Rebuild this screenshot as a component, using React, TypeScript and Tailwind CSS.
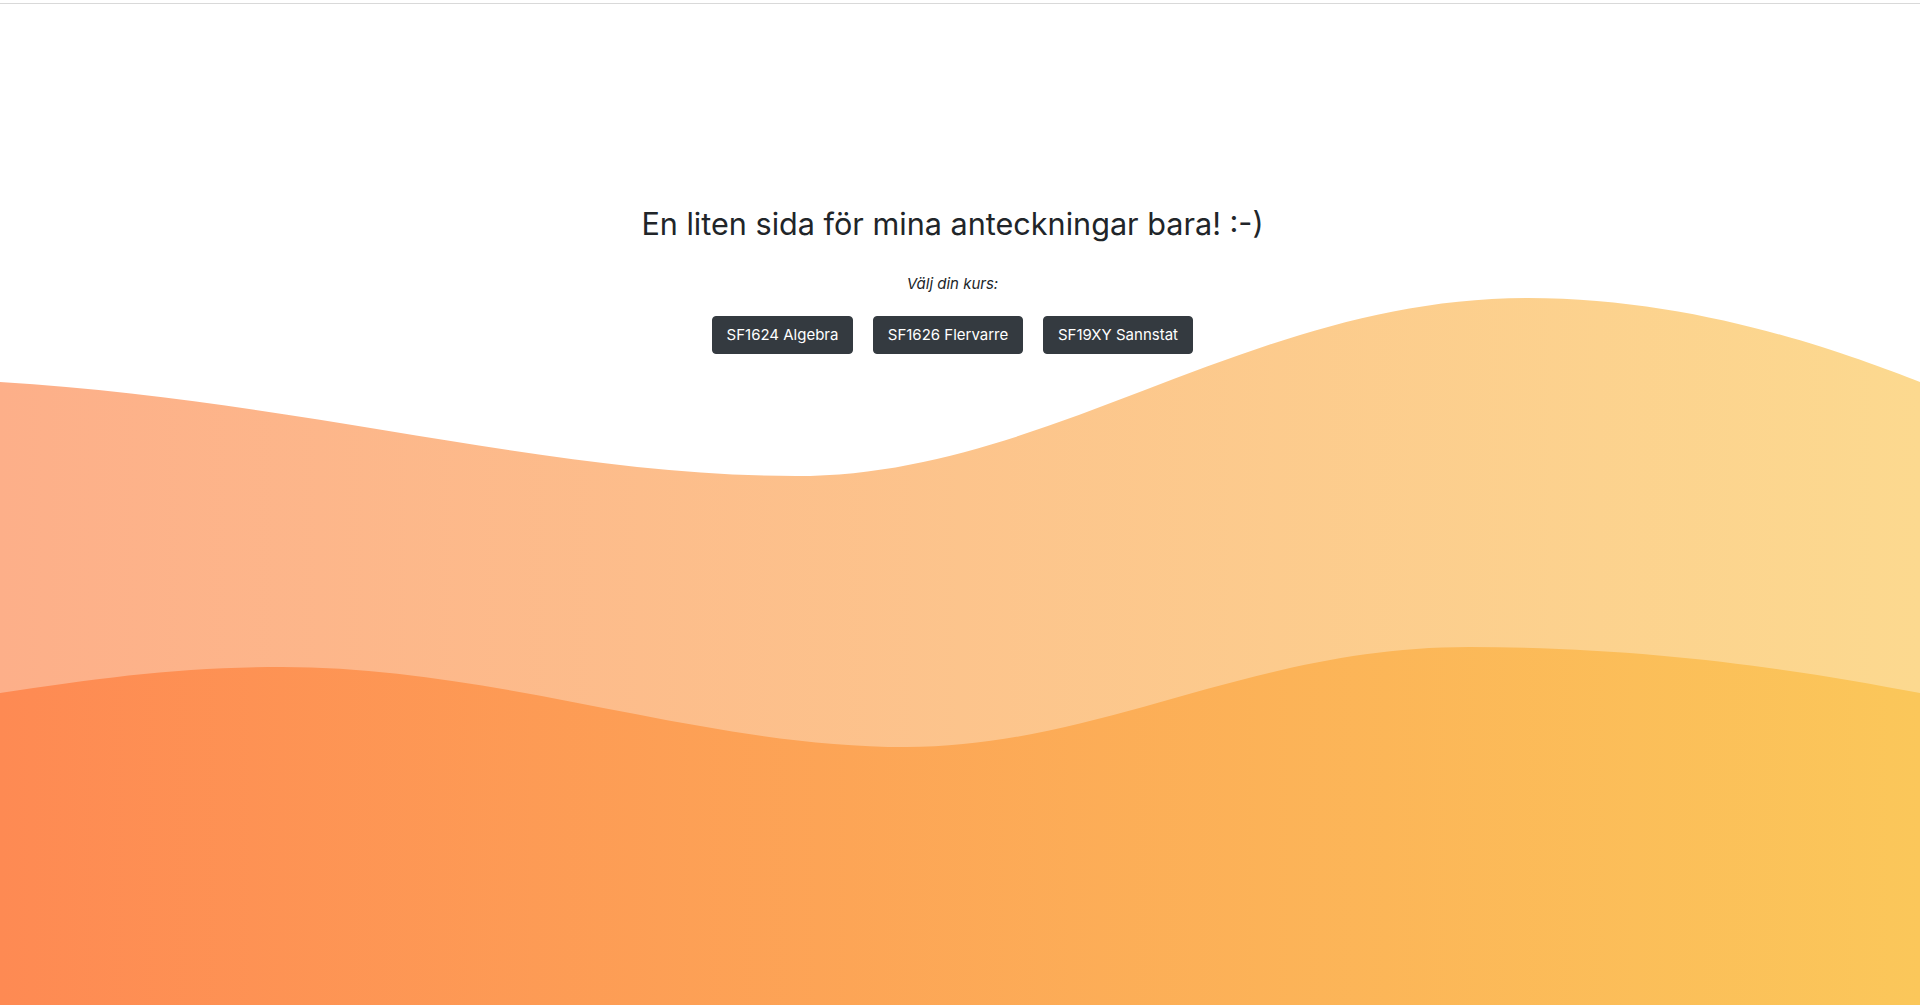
import React from "react";

const courses = [
  { label: "SF1624 Algebra", w: "w-[141px]" },
  { label: "SF1626 Flervarre", w: "w-[150px]" },
  { label: "SF19XY Sannstat", w: "w-[150px]" },
];

function Waves() {
  return (
    <svg
      className="absolute inset-0 h-full w-full"
      viewBox="0 0 1920 1005"
      preserveAspectRatio="none"
      aria-hidden="true"
    >
      <defs>
        <linearGradient id="backGrad" x1="0" y1="0" x2="1" y2="0">
          <stop offset="0%" stopColor="#fdaf89" />
          <stop offset="100%" stopColor="#fcd98f" />
        </linearGradient>
        <linearGradient id="frontGrad" x1="0" y1="0" x2="1" y2="0">
          <stop offset="0%" stopColor="#fe8a53" />
          <stop offset="100%" stopColor="#fbc75a" />
        </linearGradient>
      </defs>
      <path
        d="M0,382 C300,400 550,476 796,476 C1050,476 1250,298 1528,298 C1700,298 1850,355 1920,382 L1920,1005 L0,1005 Z"
        fill="url(#backGrad)"
      />
      <path
        d="M0,693 C100,678 180,667 282,667 C500,667 700,747 906,747 C1100,747 1250,647 1469,647 C1650,647 1800,670 1920,693 L1920,1005 L0,1005 Z"
        fill="url(#frontGrad)"
      />
    </svg>
  );
}

export default function App() {
  return (
    <div
      className="relative min-h-[1005px] w-full overflow-hidden bg-white"
      style={{ fontFamily: "Inter, 'Noto Sans', 'Liberation Sans', sans-serif" }}
    >
      <Waves />
      <div className="relative z-10 pt-[3px]">
        <div className="h-px w-full bg-[#d9d9d9]" />
        <div className="flex flex-col items-center pr-[15px] pt-[202px]">
          <h1 className="text-[30.6px] font-normal leading-[36px] text-[#212529]">
            En liten sida för mina anteckningar bara! :-)
          </h1>
          <p className="mt-[30px] text-[15px] italic leading-[24px] text-[#212529]">
            Välj din kurs:
          </p>
          <div className="mt-[20px] flex gap-[20px]">
            {courses.map((c) => (
              <button
                key={c.label}
                className={`${c.w} h-[38px] rounded-[4px] border border-[#343a40] bg-[#343a40] text-center text-[15px] leading-[24px] text-white`}
              >
                {c.label}
              </button>
            ))}
          </div>
        </div>
      </div>
    </div>
  );
}
